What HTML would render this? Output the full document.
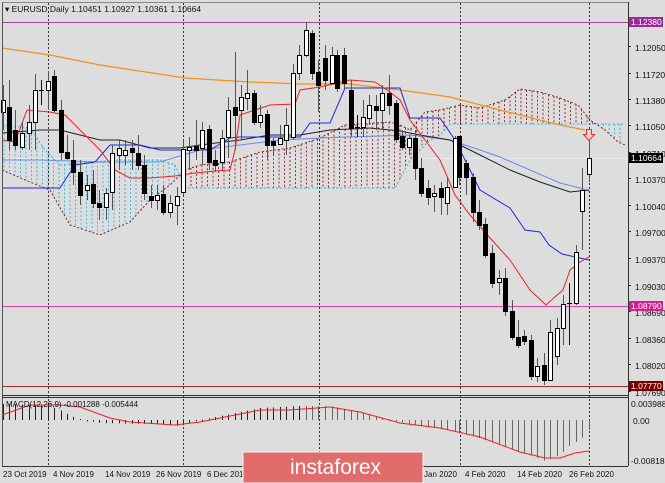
<!DOCTYPE html>
<html><head><meta charset="utf-8"><style>
html,body{margin:0;padding:0;background:#dddddd;width:665px;height:483px;overflow:hidden}
svg{display:block}
text{font-family:"Liberation Sans",sans-serif;font-size:9px;fill:#111}
</style></head><body>
<svg id="s" width="665" height="483" xmlns="http://www.w3.org/2000/svg">
<rect width="665" height="483" fill="#dddddd"/>
<g id="g"></g>
<line x1="2" y1="2.5" x2="628" y2="2.5" stroke="#888" stroke-width="1"/>
<line x1="2.5" y1="2" x2="2.5" y2="466" stroke="#555"/>
<line x1="628.5" y1="2" x2="628.5" y2="466" stroke="#333"/>
<line x1="2" y1="395.5" x2="628" y2="395.5" stroke="#333"/>
<line x1="2" y1="397.5" x2="628" y2="397.5" stroke="#333"/>
<line x1="2" y1="466.5" x2="628" y2="466.5" stroke="#333"/>
<text x="5" y="12" style="font-size:8.5px">▾ EURUSD,Daily  1.10451 1.10927 1.10361 1.10664</text>
<g id="ax"></g>
<rect x="629" y="17" width="34" height="10" fill="#9a2a9a"/><text x="631" y="25" style="fill:#fff;font-size:8.5px">1.12380</text>
<rect x="629" y="153" width="34" height="10" fill="#000"/><text x="631" y="161" style="fill:#fff;font-size:8.5px">1.10664</text>
<rect x="629" y="301" width="34" height="10" fill="#d0208f"/><text x="631" y="309" style="fill:#fff;font-size:8.5px">1.08790</text>
<rect x="629" y="381" width="34" height="10" fill="#7a0000"/><text x="631" y="389" style="fill:#fff;font-size:8.5px">1.07770</text>
<text x="631" y="407" style="font-size:8.5px">0.003988</text>
<text x="633" y="424" style="font-size:8.5px">0.00</text>
<text x="631" y="464" style="font-size:8.5px">-0.00818</text>
<text x="6" y="407" style="font-size:8px">MACD(12,26,9) -0.001288 -0.005444</text>
<g id="dates"></g>
<rect x="243" y="452" width="180" height="31" fill="#e26c6c" stroke="#f4f4f4" stroke-width="1"/>
<text x="290" y="474" style="font-size:21px;fill:#fff">instaforex</text>
</svg>
<script>
var NS="http://www.w3.org/2000/svg",g=document.getElementById('g');
function el(t,a,p){var e=document.createElementNS(NS,t);for(var k in a)e.setAttribute(k,a[k]);(p||g).appendChild(e);return e;}
function pl(pts,st,w,da){el('polyline',{points:pts.map(p=>p.join(',')).join(' '),fill:'none',stroke:st,'stroke-width':w||1,'stroke-dasharray':da||''});}
function interp(pts,x){for(var i=0;i<pts.length-1;i++){if(x>=pts[i][0]&&x<=pts[i+1][0]){var t=(x-pts[i][0])/(pts[i+1][0]-pts[i][0]||1);return pts[i][1]+t*(pts[i+1][1]-pts[i][1]);}}return null;}
el('line',{x1:2,y1:22.5,x2:628,y2:22.5,stroke:'#a040a8'});
el('line',{x1:2,y1:158.5,x2:628,y2:158.5,stroke:'#ececf4'});
el('line',{x1:2,y1:306.5,x2:628,y2:306.5,stroke:'#e040a8'});
el('line',{x1:2,y1:386.5,x2:628,y2:386.5,stroke:'#a03030'});
[48,183,319,460,589].forEach(x=>el('line',{x1:x+.5,y1:3,x2:x+.5,y2:466,stroke:'#333','stroke-dasharray':'2,2'}));
var cA=[[2,125],[30,128],[45,150],[60,165],[90,162],[120,160],[160,160],[175,165],[185,188],[260,188],[330,188],[395,188],[410,160],[430,140],[440,135],[450,124],[625,124]];
var cB=[[2,170],[30,182],[50,190],[70,225],[100,235],[130,222],[150,200],[170,185],[185,170],[200,165],[230,162],[260,152],[290,148],[320,138],[345,125],[390,122],[400,125],[410,130],[425,112],[440,110],[460,105],[480,108],[505,100],[520,89],[540,92],[560,98],[578,105],[590,120],[605,130],[618,142],[625,145]];
for(var x=4;x<626;x+=5.5){var a=interp(cA,x),b=interp(cB,x);if(a==null||b==null)continue;var col=(b>a)?'#28b8e8':'#8b2020';el('line',{x1:x,y1:Math.min(a,b),x2:x,y2:Math.max(a,b),stroke:col,'stroke-dasharray':'2,2','stroke-width':0.9});}
pl(cA,'#28b8e8',1,'2,2');pl(cB,'#8b2020',1,'2,2');
pl([[2,48],[50,55],[100,65],[185,78],[250,82],[300,84],[350,84],[400,90],[450,97],[500,110],[560,125],[585,130]],'#f5901a',1.3);
pl([[2,160],[40,160],[100,162],[160,162],[200,150],[240,145],[280,140],[320,138],[345,137],[380,136],[410,135],[450,140],[480,150],[500,157],[530,170],[560,183],[580,188],[589,191]],'#6a8af0',1);
pl([[2,133],[40,130],[60,130],[80,135],[100,140],[120,140],[150,148],[180,148],[200,145],[240,140],[270,135],[300,135],[330,130],[370,128],[400,131],[420,135],[450,140],[480,155],[510,170],[540,182],[570,192],[589,190]],'#222',1);
pl([[2,188],[60,188],[65,180],[75,165],[95,162],[110,145],[140,145],[160,150],[210,150],[230,138],[240,137],[300,137],[310,123],[330,123],[345,88],[400,88],[410,118],[440,118],[455,140],[480,190],[510,208],[525,230],[540,232],[549,245],[562,254],[580,258],[589,260]],'#1a2ae8',1);
pl([[2,140],[15,142],[27,110],[50,112],[65,115],[100,150],[115,170],[130,178],[150,178],[175,176],[195,173],[215,171],[230,170],[235,150],[240,115],[270,105],[295,104],[300,90],[320,87],[350,80],[375,82],[390,92],[400,100],[410,120],[425,140],[440,160],[455,195],[470,215],[490,238],[510,260],[530,290],[546,305],[556,296],[563,290],[570,270],[580,262],[589,257]],'#f02020',1);
var C=[[3,1,100,112,85,130],[9,0,107,140,80,150],[15,0,130,145,110,150],[22,1,133,147,122,150],[29,1,122,133,105,150],[35,1,90,122,74,150],[41,2,90,91,80,105],[48,1,81,90,71,110],[54,0,76,110,70,112],[61,0,110,152,100,160],[67,0,152,158,135,160],[73,0,160,172,140,185],[80,0,172,195,160,205],[87,1,185,190,175,200],[93,0,184,203,170,208],[99,0,203,207,190,220],[106,1,193,207,188,220],[112,1,153,192,145,210],[119,1,148,155,140,170],[125,1,150,155,140,165],[132,0,148,152,140,170],[138,0,153,165,135,170],[144,0,165,193,155,200],[151,0,196,200,185,208],[157,1,195,200,185,210],[163,0,194,212,185,215],[170,1,203,212,195,218],[177,1,196,205,187,225],[183,1,149,192,140,195],[189,1,147,150,137,170],[196,0,146,150,120,160],[202,1,130,148,122,165],[209,0,129,162,125,170],[215,0,160,165,150,172],[222,1,138,162,130,170],[228,1,110,137,97,158],[235,0,107,115,52,150],[241,1,97,110,85,140],[247,1,93,98,70,110],[254,0,93,122,90,125],[260,1,115,122,105,128],[267,0,114,145,110,160],[273,0,141,145,138,155],[280,1,138,144,125,145],[286,1,125,140,108,155],[293,1,73,137,64,140],[299,1,55,73,45,80],[306,1,30,55,22,57],[312,0,33,73,30,80],[318,0,72,85,60,112],[325,0,58,80,45,90],[332,1,55,83,47,85],[337,0,55,88,50,92],[344,0,55,83,48,90],[351,0,90,128,80,137],[357,2,127,128,115,137],[363,1,117,127,100,137],[369,1,105,118,95,125],[376,0,106,110,95,130],[382,1,93,110,85,130],[389,0,93,105,75,115],[396,0,103,139,100,143],[402,0,136,147,130,150],[409,1,138,147,135,155],[415,0,138,168,130,180],[421,0,168,193,158,197],[428,0,188,197,180,205],[434,1,193,196,185,212],[441,0,188,197,182,215],[447,1,187,203,178,215],[455,1,138,187,136,188],[459,0,136,177,136,185],[466,0,163,177,160,195],[473,0,177,212,173,222],[479,0,212,225,200,230],[485,0,224,255,218,258],[492,0,253,283,245,288],[499,1,278,282,270,295],[505,0,278,311,268,316],[512,0,311,337,300,340],[518,0,337,345,320,348],[524,0,336,341,330,345],[531,0,340,376,335,380],[537,1,366,376,358,382],[544,0,365,380,353,385],[550,1,332,380,320,380],[557,1,328,356,318,365],[563,1,304,328,295,345],[569,2,303,304,283,345],[576,1,252,303,245,305],[582,1,190,211,168,250],[589,1,158,174,135,182]];
C.forEach(c=>{var x=c[0];el('line',{x1:x+.5,y1:c[4],x2:x+.5,y2:c[5],stroke:c[1]==2?'#111':'#555'});
 if(c[1]==2)el('line',{x1:x-2,y1:c[2]+.5,x2:x+3,y2:c[2]+.5,stroke:'#000'});
 else el('rect',{x:x-1.5,y:c[2]+.5,width:4,height:Math.max(1,c[3]-c[2]),fill:c[1]?'#fff':'#000',stroke:'#000','stroke-width':1});});
el('path',{d:'M586.5 129.5 h5 v5 h3 l-5.5 6 l-5.5 -6 h3 z',fill:'#f4d0d0',stroke:'#e83030','stroke-width':1});
var H=[[3,404],[45,405],[60,410],[75,418],[85,420],[100,423],[150,424],[180,426],[200,420],[220,416],[240,412],[260,408],[300,406],[330,406],[360,412],[390,420],[420,426],[460,432],[500,445],[530,455],[545,461],[560,455],[570,445],[580,440],[589,430]];
C.forEach(c=>{var x=c[0],y=interp(H,x);if(y==null)return;el('line',{x1:x+.5,y1:Math.min(y,420),x2:x+.5,y2:Math.max(y,420)+(Math.abs(y-420)<1?1:0),stroke:x<300?'#222':'#666'});});
pl([[2,415],[30,405],[60,405],[80,407],[110,418],[130,422],[175,425],[200,422],[230,416],[260,410],[290,410],[330,407],[360,412],[400,423],[440,428],[480,437],[520,452],[545,458],[560,458],[575,453],[589,451]],'#f02020',1);
var ax=document.getElementById('ax');
[['1.12050',51],['1.11720',78],['1.11380',104],['1.11050',130],['1.10710',157],['1.10370',183],['1.10040',210],['1.09700',236],['1.09370',263],['1.09030',290],['1.08690',316],['1.08360',343],['1.08020',369],['1.07690',396]].forEach(a=>{el('line',{x1:628,y1:a[1]-4.5,x2:631,y2:a[1]-4.5,stroke:'#333'},ax);var t=el('text',{x:635,y:a[1],style:'font-size:8.5px'},ax);t.textContent=a[0];});
var dg=document.getElementById('dates');
[['23 Oct 2019',3],['4 Nov 2019',53],['14 Nov 2019',105],['26 Nov 2019',156],['6 Dec 2019',207],['Jan 2020',424],['4 Feb 2020',465],['14 Feb 2020',517],['26 Feb 2020',569]].forEach(a=>{var t=el('text',{x:a[1],y:477,style:'font-size:8px'},dg);t.textContent=a[0];});
</script>
</body></html>
